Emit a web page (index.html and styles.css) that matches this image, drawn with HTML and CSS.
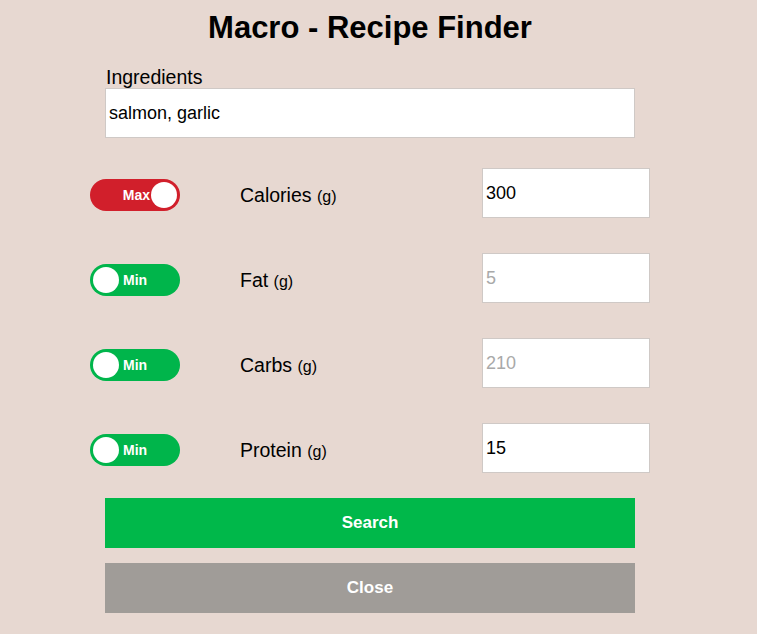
FILE: index.html
```html
<!DOCTYPE html>
<html>
<head>
<meta charset="utf-8">
<link rel="stylesheet" href="styles.css">
</head>
<body>
<div class="page">
  <h1 class="title">Macro - Recipe Finder</h1>
  <div class="field">
    <label class="field-label">Ingredients</label>
    <div class="text-input">salmon, garlic</div>
  </div>
  <div class="rows">
    <div class="row">
      <div class="toggle toggle-max"><span class="toggle-text">Max</span><span class="knob"></span></div>
      <div class="macro">Calories <small>(g)</small></div>
      <div class="num-input">300</div>
    </div>
    <div class="row">
      <div class="toggle toggle-min"><span class="knob"></span><span class="toggle-text">Min</span></div>
      <div class="macro">Fat <small>(g)</small></div>
      <div class="num-input placeholder">5</div>
    </div>
    <div class="row">
      <div class="toggle toggle-min"><span class="knob"></span><span class="toggle-text">Min</span></div>
      <div class="macro">Carbs <small>(g)</small></div>
      <div class="num-input placeholder">210</div>
    </div>
    <div class="row">
      <div class="toggle toggle-min"><span class="knob"></span><span class="toggle-text">Min</span></div>
      <div class="macro">Protein <small>(g)</small></div>
      <div class="num-input">15</div>
    </div>
  </div>
  <div class="buttons">
    <div class="btn btn-search">Search</div>
    <div class="btn btn-close">Close</div>
  </div>
</div>
</body>
</html>
```
FILE: styles.css
```css
html, body {
  margin: 0;
  padding: 0;
  background: #e7d8d1;
  font-family: "Liberation Sans", Arial, sans-serif;
  color: #000;
}
.page {
  width: 560px;
  margin-left: 90px;
  padding-top: 10px;
}
.title {
  margin: 0;
  text-align: center;
  font-size: 31px;
  line-height: 36px;
  font-weight: bold;
}
.field {
  padding: 0 15px;
  margin-top: 20px;
}
.field-label {
  display: block;
  font-size: 19.5px;
  line-height: 22px;
  padding-left: 1px;
}
.text-input {
  box-sizing: border-box;
  height: 50px;
  background: #fff;
  border: 1px solid #cfc9c6;
  font-size: 18px;
  line-height: 48px;
  padding-left: 3px;
}
.rows {
  margin-top: 30px;
  display: flex;
  flex-direction: column;
  gap: 35px;
}
.row {
  display: flex;
  align-items: center;
  height: 50px;
}
.toggle {
  box-sizing: border-box;
  width: 90px;
  height: 32px;
  border-radius: 16px;
  display: flex;
  align-items: center;
  padding: 0 3px;
  color: #fff;
  font-weight: bold;
  font-size: 14px;
  margin-top: 4px;
}
.toggle-max {
  background: #d11f2b;
  justify-content: flex-end;
}
.toggle-min {
  background: #00b54b;
}
.knob {
  width: 26px;
  height: 26px;
  border-radius: 50%;
  background: #fff;
  flex: none;
}
.toggle-max .toggle-text {
  margin-right: 1px;
}
.toggle-min .toggle-text {
  margin-left: 4px;
}
.macro {
  margin-left: 60px;
  font-size: 19.5px;
  width: 242px;
  padding-top: 4px;
}
.macro small {
  font-size: 16px;
}
.num-input {
  box-sizing: border-box;
  width: 168px;
  height: 50px;
  background: #fff;
  border: 1px solid #cfc9c6;
  font-size: 18px;
  line-height: 48px;
  padding-left: 3px;
}
.num-input.placeholder {
  color: #a9a9a9;
}
.buttons {
  padding: 0 15px;
  margin-top: 25px;
  display: flex;
  flex-direction: column;
  gap: 15px;
}
.btn {
  height: 50px;
  line-height: 50px;
  text-align: center;
  color: #fff;
  font-size: 17px;
  font-weight: bold;
}
.btn-search {
  background: #00b84a;
}
.btn-close {
  background: #a09c98;
}
```
